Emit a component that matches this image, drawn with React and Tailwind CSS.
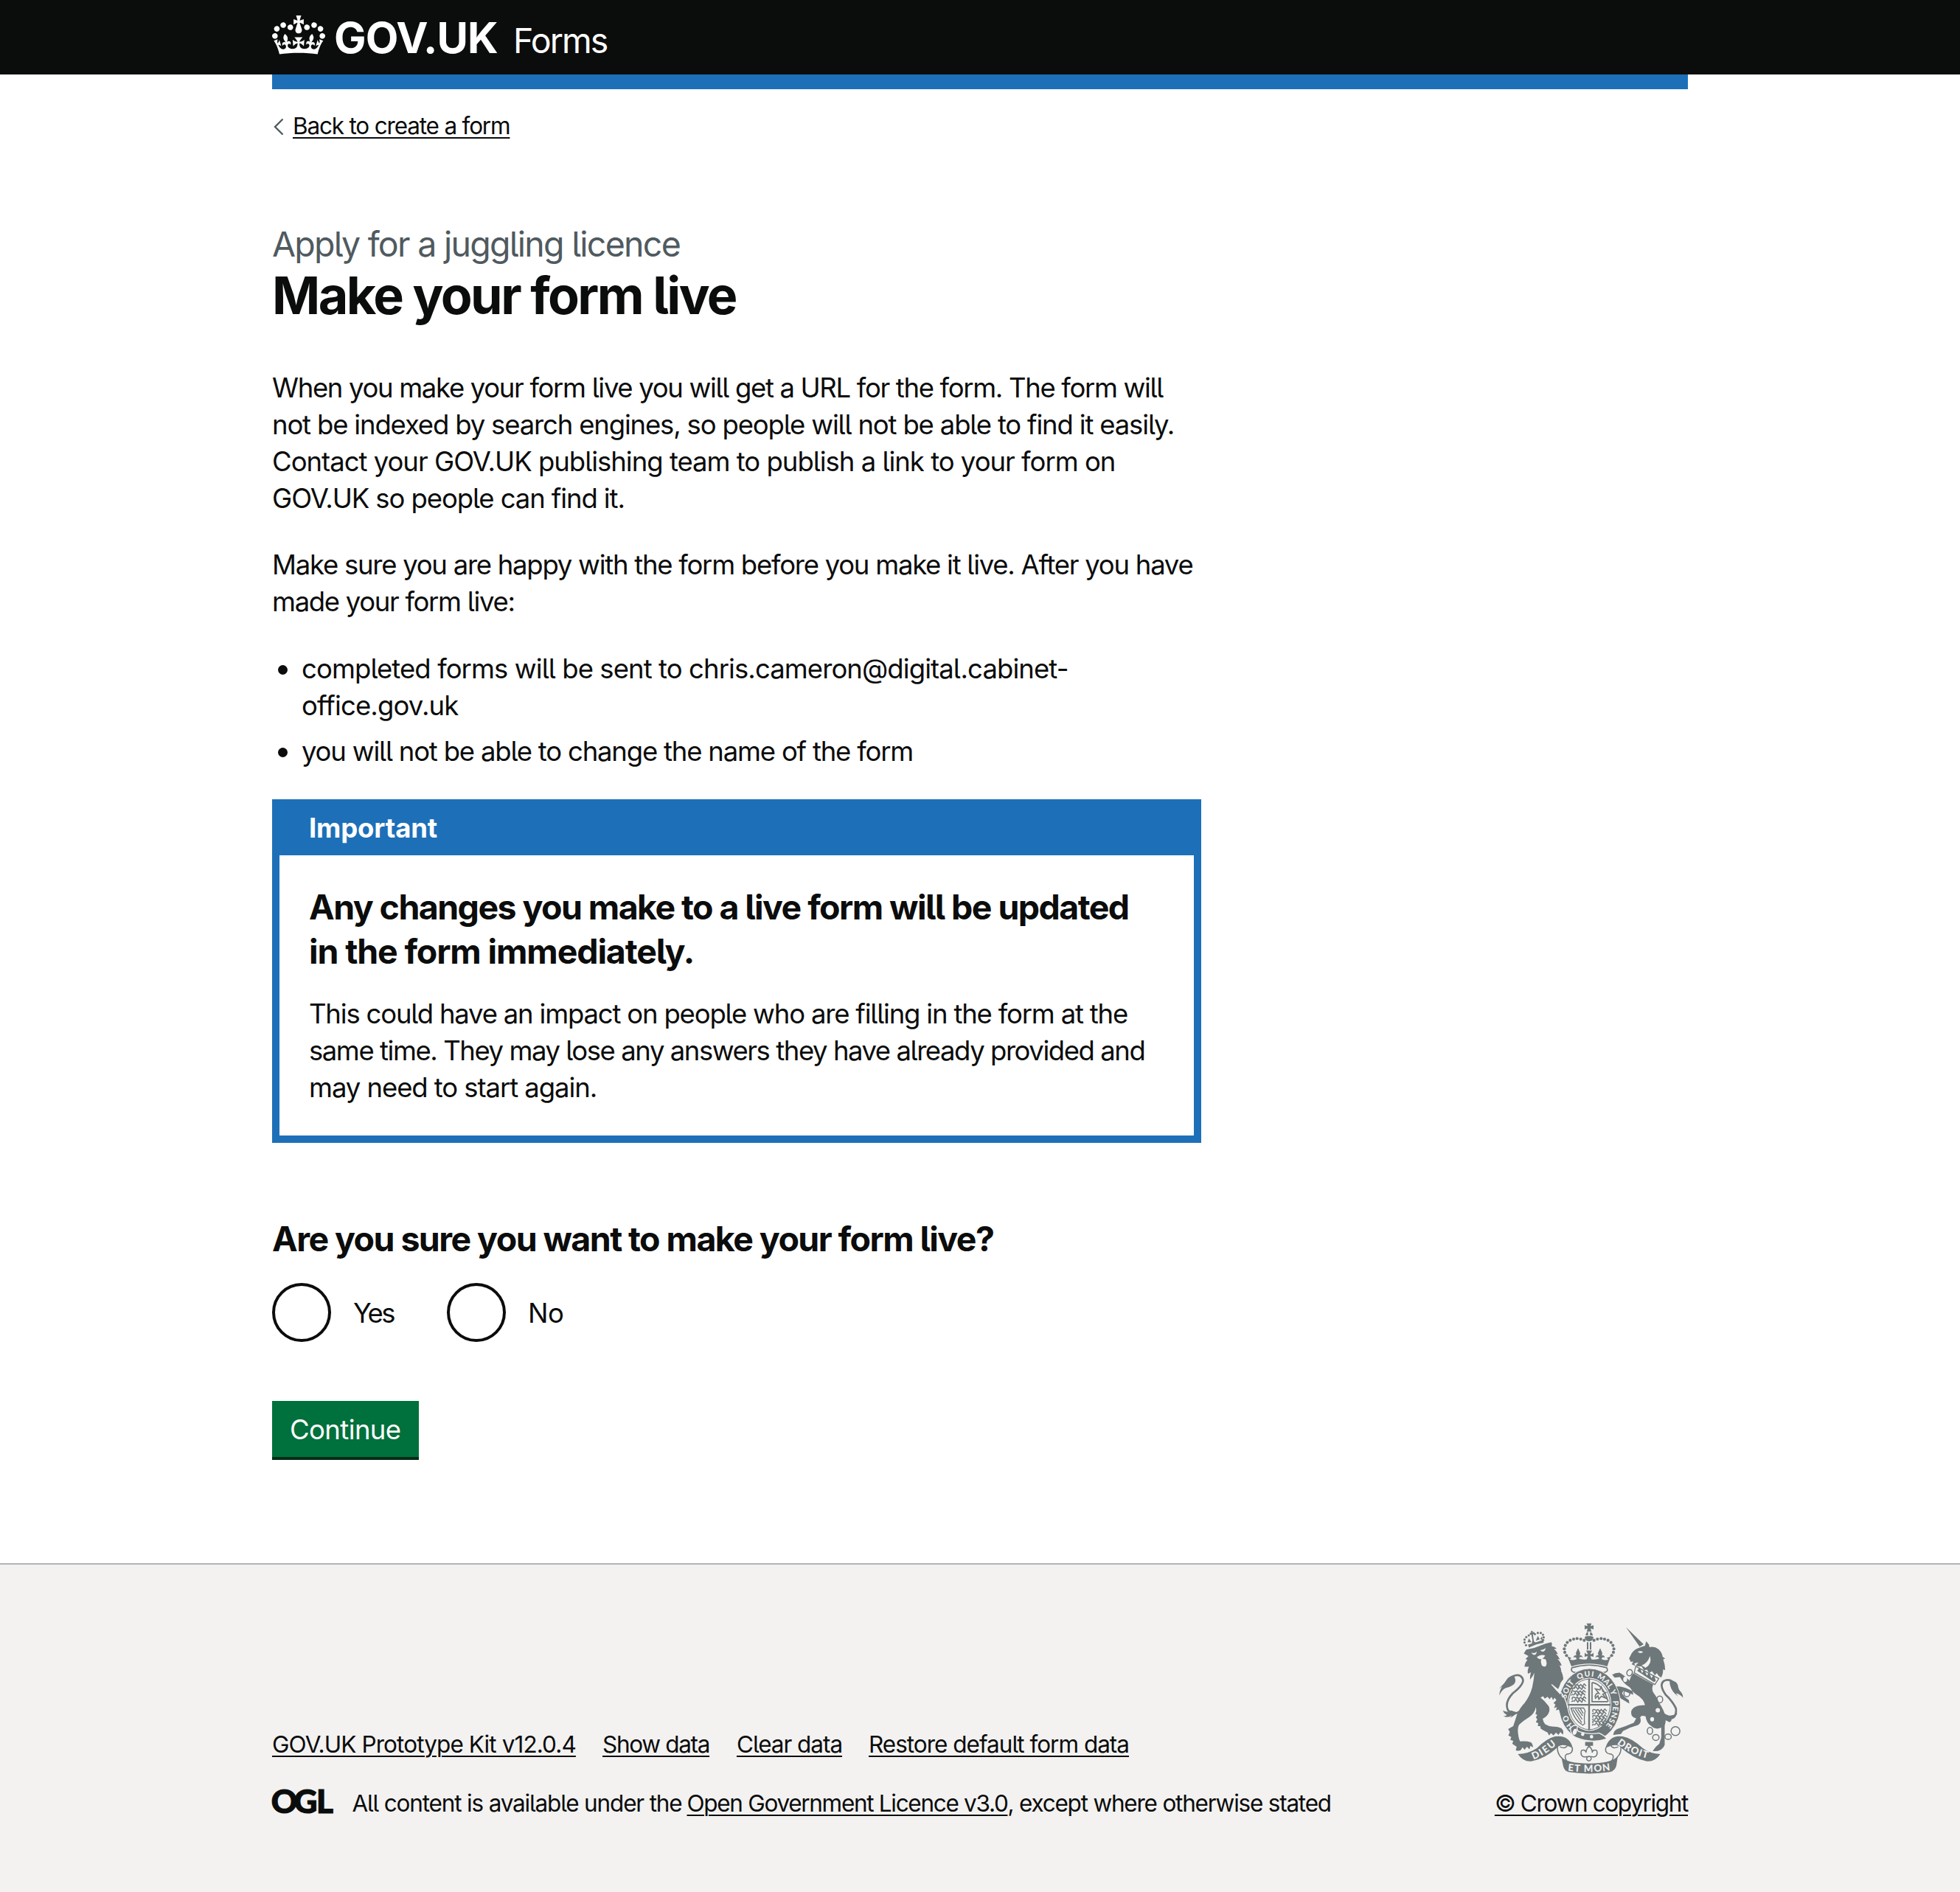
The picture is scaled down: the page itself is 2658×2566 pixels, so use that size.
const LION_MARKS = [[78, 250], [76, 276], [78, 302], [162, 352], [162, 376], [162, 398]];
const LION_CROWN = [[118, 94], [112, 83], [112, 71], [119, 61], [129, 54], [154, 49], [166, 44], [178, 44], [187, 51], [190, 62], [188, 73]];
const CROWN_BEADS = [[130, 74], [116, 69], [101, 67], [87, 69], [73, 74], [61, 83], [53, 95], [49, 109], [51, 123], [58, 136]];

function Crest({ className }) {
  return (
    <svg className={className} viewBox="0 0 765 625" fill="#6e7779">
      {/* unicorn */}
      <g transform="translate(465 0)">
        <path d="M60 20L132 90L116 100Z" />
        <path d="M73 148L84 126Q96 110 116 104L138 96Q140 84 143 78L154 92L156 102Q178 98 192 110Q208 124 210 142L220 148L212 152Q220 174 220 196L212 192Q212 212 204 226Q192 220 186 208L178 216L166 200L154 208L146 194L134 196L124 180Q108 182 100 176L112 164L94 168L98 178L84 172L90 160L80 162Z" />
        <path d="M108 122Q118 114 130 122Q122 130 108 122ZM124 176Q148 168 158 138Q168 170 140 186Z" fill="#f3f2f1" />
        <path d="M100 180L194 230L178 254L94 206Z" fill="#f3f2f1" stroke="#6e7779" strokeWidth="4" />
        <path d="M106 198L116 184L126 208L134 194L146 218L154 204L164 228L174 214L182 240L174 244Z" />
        <path d="M90 208Q130 232 172 254Q164 268 170 284Q186 304 196 330Q214 356 222 386Q224 402 218 422V500Q208 528 170 526Q176 512 196 496L204 470V430Q180 440 164 424Q144 412 140 384Q122 378 118 388Q126 410 108 420Q76 428 48 444L40 456L8 460Q10 444 24 436Q60 424 92 410L102 392Q78 388 82 362Q92 338 138 338Q132 312 104 296Q80 280 74 258Q70 234 90 208Z" />
        <path d="M80 244Q56 218 34 206Q16 206 4 214L14 226L36 224Q48 246 62 256L84 272ZM88 282Q60 266 36 262L2 262L6 276L26 276Q26 296 38 310L58 322L74 332L72 318L56 306L44 290L50 280L90 296Z" />
        <path d="M232 392Q268 396 264 352Q250 322 222 296Q194 256 214 240Q232 230 250 242" fill="none" stroke="#6e7779" strokeWidth="8" />
        <path d="M238 238Q266 236 272 258Q274 276 284 284Q294 296 292 308Q282 294 264 290L272 302Q238 278 238 238ZM196 344Q206 370 228 378Q240 386 270 372Q260 388 246 392Q248 404 238 408Q224 402 210 392Q196 372 196 344Z" />
        <g fill="none" stroke="#6e7779" strokeWidth="4.5">
          <ellipse cx="75" cy="206" rx="11" ry="13" transform="rotate(20 75 206)" />
          <ellipse cx="64" cy="290" rx="12" ry="14" />
          <ellipse cx="198" cy="315" rx="12" ry="14" />
          <ellipse cx="158" cy="443" rx="11" ry="14" />
          <ellipse cx="182" cy="470" rx="13" ry="12" />
          <ellipse cx="232" cy="467" rx="13" ry="11" />
          <circle cx="262" cy="444" r="18" />
        </g>
        <g fill="#f3f2f1">
          <ellipse cx="57" cy="233" rx="8" ry="11" />
          <ellipse cx="190" cy="359" rx="9" ry="9" />
          <ellipse cx="167" cy="396" rx="8" ry="9" />
        </g>
      </g>

      {/* crown, garter and shield */}
      <g transform="translate(225 0)">
        <path d="M140 5H160L156 16Q162 16 168 12V30Q162 26 156 26L160 38H140L144 26Q138 26 132 30V12Q138 16 144 16ZM136 54Q138 40 146 40V54ZM154 40Q164 44 165 54H154Z" />
        <path d="M132 62Q134 56 150 56Q166 56 168 62Q164 78 150 78Q136 78 132 62ZM141 82H147V112H141ZM153 82H159V112H153Z" />
        {CROWN_BEADS.map(([x, y]) => (
          <g key={x}>
            <circle cx={x} cy={y} r="6.2" />
            <circle cx={300 - x} cy={y} r="6.2" />
          </g>
        ))}
        <path d="M138 116H162L155 130Q164 132 168 124V142Q160 138 155 140L160 152Q184 154 192 148Q182 136 176 146Q178 132 188 136L186 126L195 106L204 126L202 136Q212 132 214 146Q206 138 200 150Q218 158 228 152L222 144Q234 146 240 136Q230 160 224 180Q150 158 78 180Q70 160 60 136Q66 146 78 144L72 152Q82 158 100 150Q94 138 86 146Q88 132 98 136L96 126L105 106L114 126L112 136Q122 132 124 146Q118 136 108 148Q116 154 140 152L145 140Q140 138 132 142V124Q136 132 145 130Z" />
        <path d="M80 186Q150 164 222 186Q232 204 206 206Q150 184 96 206Q72 204 80 186Z" fill="none" stroke="#6e7779" strokeWidth="5" />
        <ellipse cx="152" cy="337" rx="126" ry="148" stroke="#f3f2f1" strokeWidth="3" />
        <ellipse cx="151" cy="335" rx="90" ry="108" fill="#f3f2f1" />
        <path d="M150 230V440M64 337H238" stroke="#6e7779" strokeWidth="7" />
        <ellipse cx="151" cy="335" rx="85" ry="103" fill="none" stroke="#6e7779" strokeWidth="3" />
        {LION_MARKS.map(([x, y]) => (
          <path key={`${x}-${y}`} transform={`translate(${x} ${y})`} d="M4 14Q0 2 10 4Q16 10 24 4L30 12L38 4L44 12L52 2L60 10M10 22L18 12L26 24L32 14L42 24L48 12L58 22M0 22L8 18M30 6V22" fill="none" stroke="#6e7779" strokeWidth="4.5" />
        ))}
        <path d="M162 246V324H226M162 246Q206 252 228 324M174 306Q178 286 190 290L176 272L194 276L200 264L206 282L218 288L206 294L218 310L200 302L190 314L186 300L174 312" fill="none" stroke="#6e7779" strokeWidth="5" />
        <path d="M76 350H128L134 362Q128 390 132 414L124 420Q90 400 76 350ZM84 356L120 410M94 354L122 396M104 354L124 382M114 352L126 372" fill="none" stroke="#6e7779" strokeWidth="4" />
        <path id="garter" d="M98 434A96 116 0 1 1 191 443" fill="none" />
        <g fill="#f3f2f1" fontFamily="Lato" fontWeight="900" fontSize="31">
          <text><textPath href="#garter" startOffset="12" textLength="56">HO</textPath></text>
          <text><textPath href="#garter" startOffset="134" textLength="74">SOIT</textPath></text>
          <text><textPath href="#garter" startOffset="228" textLength="64">QUI</textPath></text>
          <text><textPath href="#garter" startOffset="306" textLength="98">MAL Y</textPath></text>
          <text><textPath href="#garter" startOffset="426" textLength="108">PENSE</textPath></text>
        </g>
        <path d="M74 434Q86 414 104 424Q96 436 108 446Q150 460 190 452Q214 462 222 476Q160 496 96 470Q76 462 74 434Z" stroke="#f3f2f1" strokeWidth="4" />
        <circle cx="124" cy="457" r="7" fill="#f3f2f1" />
        <circle cx="160" cy="467" r="7" fill="#f3f2f1" />
        <ellipse cx="92" cy="447" rx="8" ry="13" fill="#f3f2f1" transform="rotate(20 92 447)" />
      </g>

      {/* lion */}
      <path d="M126 92Q155 84 188 72L190 84Q160 88 130 104Z" />
      {LION_CROWN.map(([x, y]) => (
        <circle key={`${x}-${y}`} cx={x} cy={y} r="4.6" />
      ))}
      <path d="M138 36L145 35L145 42L152 40L153 48L146 49L150 78L158 84L142 88L144 74L140 51L134 52L133 44L139 43ZM124 82L130 66L140 82ZM158 76L166 56L174 70ZM176 68L183 58L186 74Z" />
      <path d="M109 128L119 112Q150 108 175 96Q200 86 221 82Q226 88 222 98Q236 100 243 108L232 110Q244 118 248 130L240 129Q250 138 256 152L246 150Q260 162 263 178L255 176Q262 192 262 202Q268 212 270 232Q258 244 254 262L248 274L222 256Q240 278 262 300Q276 322 282 345L284 362L278 352L274 368L266 358L256 368L252 356L240 360L244 346L232 350L238 336L230 330L242 318L234 308L228 318L222 304L214 314L206 304L194 312L188 302L177 307Q194 320 210 342Q216 352 212 366Q206 384 186 394Q188 408 196 416Q216 428 236 426Q262 428 268 440Q272 450 268 458L258 448L250 460L240 450L230 462L220 452L212 462L206 450Q190 442 178 434L176 424L166 424L168 412L158 408L164 396L158 388L164 378L156 374Q162 366 158 346Q154 370 132 386Q106 402 90 418Q82 430 86 456Q88 476 94 486Q120 484 138 490Q148 498 146 510L136 504L132 518L122 508L112 520L104 510L96 522Q84 526 76 522L80 508L62 496L66 484L54 480L58 468L46 462L52 448L45 436L66 424Q72 406 80 380Q92 350 112 330Q134 300 142 270Q150 240 152 206Q146 222 134 234Q134 218 138 204L126 210Q122 198 130 182L112 182Q112 168 124 154L116 150L128 138Z" />
      <path d="M222 254L252 278Q278 300 288 350" fill="none" stroke="#f3f2f1" strokeWidth="4" />
      <path d="M95 362Q66 384 44 358Q30 326 64 290Q106 258 106 236Q100 212 74 217Q60 220 50 230" fill="none" stroke="#6e7779" strokeWidth="8" />
      <path d="M68 218Q82 240 68 254Q54 264 36 268Q18 276 10 298Q8 284 20 264Q6 272 10 268Q28 254 38 236Q48 220 68 218Z" />
      <path d="M24 360Q40 370 58 360Q74 368 84 366Q72 382 52 390Q58 384 60 380Q46 392 26 384Q38 382 40 378Q28 374 24 360Z" />
      <path d="M140 124Q152 130 162 120Q160 134 150 134Q142 132 140 124ZM176 114Q188 114 198 106Q196 118 188 120Q180 120 176 114ZM162 142Q178 130 196 136Q192 146 184 148L198 152Q206 170 198 180Q188 184 182 176Q176 162 180 150Q168 154 162 142Z" fill="#f3f2f1" />

      {/* scroll */}
      <g transform="translate(-60 -30)">
        <path d="M145 568Q190 566 222 544Q262 504 296 496Q354 488 368 542L346 534Q318 526 304 542Q256 586 200 597Q166 600 145 568Z" />
        <path d="M725 568Q684 566 654 544Q608 502 572 496Q518 488 502 542L524 534Q552 526 566 542Q616 586 670 597Q704 600 725 568Z" />
        <path d="M322 580Q346 606 435 606Q526 606 552 576L546 616Q540 636 520 641Q435 654 352 641Q334 636 330 618Z" />
        <g fill="none" stroke="#6e7779" strokeWidth="4.5">
          <path d="M306 538Q304 566 324 584Q332 594 346 600M366 540Q372 566 344 568Q330 576 346 600M346 534Q338 548 316 538" />
          <path d="M564 538Q568 562 550 580Q542 594 524 600M504 540Q496 566 526 568Q542 576 524 600M524 534Q532 548 554 538" />
          <path d="M434 596Q418 590 430 578Q402 584 402 562Q402 548 416 552Q424 556 422 562Q424 544 435 536Q448 546 448 562Q446 556 454 552Q468 548 468 562Q468 584 440 578Q450 590 434 596ZM422 578H448" />
        </g>
        <path d="M419 518H451V534H441L435 542L429 534H419Z" />
        <path id="dieu" d="M206 590Q250 578 316 518" fill="none" />
        <path id="droit" d="M546 524Q606 572 686 588" fill="none" />
        <path id="etmon" d="M346 635Q435 647 526 633" fill="none" />
        <g fill="#f3f2f1" fontFamily="Lato" fontWeight="900" fontSize="40">
          <text><textPath href="#dieu" startOffset="2" textLength="112">DIEU</textPath></text>
          <text><textPath href="#droit" startOffset="2" textLength="140">DROIT</textPath></text>
          <text><textPath href="#etmon" startOffset="2" textLength="174">ET MON</textPath></text>
        </g>
      </g>
    </svg>
  );
}

function Crown({ className }) {
  return (
    <svg className={className} viewBox="0 0 132 97" fill="currentColor">
      <path fillRule="evenodd" d="M25 30.2c3.5 1.5 7.7-.2 9.1-3.7 1.5-3.6-.2-7.8-3.9-9.2-3.6-1.4-7.6.3-9.1 3.9-1.4 3.5.3 7.5 3.9 9zM9 39.5c3.6 1.5 7.8-.2 9.2-3.7 1.5-3.6-.2-7.8-3.9-9.1-3.6-1.5-7.6.2-9.1 3.8-1.4 3.5.3 7.5 3.8 9zM4.4 57.2c3.5 1.5 7.7-.2 9.1-3.8 1.5-3.6-.2-7.7-3.9-9.1-3.5-1.5-7.6.3-9.1 3.8-1.4 3.5.3 7.6 3.9 9.1zm38.3-21.4c3.5 1.5 7.7-.2 9.1-3.8 1.5-3.6-.2-7.7-3.9-9.1-3.6-1.5-7.6.3-9.1 3.8-1.3 3.6.4 7.7 3.9 9.1zm64.4-5.6c-3.6 1.5-7.8-.2-9.1-3.7-1.5-3.6.2-7.8 3.8-9.2 3.6-1.4 7.7.3 9.2 3.9 1.3 3.5-.4 7.5-3.9 9zm15.9 9.3c-3.6 1.5-7.7-.2-9.1-3.7-1.5-3.6.2-7.8 3.7-9.1 3.6-1.5 7.7.2 9.2 3.8 1.5 3.5-.3 7.5-3.8 9zm4.7 17.7c-3.6 1.5-7.8-.2-9.2-3.8-1.5-3.6.2-7.7 3.9-9.1 3.6-1.5 7.7.3 9.2 3.8 1.3 3.5-.4 7.6-3.9 9.1zM89.3 35.8c-3.6 1.5-7.8-.2-9.2-3.8-1.4-3.6.2-7.7 3.9-9.1 3.6-1.5 7.7.3 9.2 3.8 1.4 3.6-.3 7.7-3.9 9.1zM69.7 17.7l8.9 4.7V9.3l-8.9 2.8c-.2-.3-.5-.6-.9-.9L72.4 0H59.6l3.5 11.2c-.3.3-.6.5-.9.9l-8.8-2.8v13.1l8.8-4.7c.3.3.6.7.9.9l-5 15.4v.1c-.2.8-.4 1.6-.4 2.4 0 4.1 3.1 7.5 7 8.1h.2c.3 0 .7.1 1 .1.4 0 .7 0 1-.1h.2c4-.6 7.1-4.1 7.1-8.1 0-.8-.1-1.7-.4-2.4V34l-5.1-15.4c.4-.2.7-.6 1-.9zM66 92.8c16.9 0 32.8 1.1 47.1 3.2 4-16.9 8.9-26.7 14-33.5l-9.6-3.4c1 4.9 1.1 7.2 0 10.2-1.5-1.4-3-4.3-4.2-8.7L108.6 76c2.8-2 5-3.2 7.5-3.3-4.4 9.4-10 11.9-13.6 11.2-4.3-.8-6.3-4.6-5.6-7.9 1-4.7 5.7-5.9 8-.5 4.3-8.7-3-11.4-7.6-8.8 7.1-7.2 7.9-13.5 2.1-21.1-8 6.1-8.1 12.3-4.5 20.8-4.7-5.4-12.1-2.5-9.5 6.2 3.4-5.2 7.9-2 7.2 3.1-.6 4.3-6.4 7.8-13.5 7.2-10.3-.9-10.9-8-11.2-13.8 2.5-.5 7.1 1.8 11 7.3L80.2 60c-4.1 4.4-8 5.3-12.3 5.4 1.4-4.4 8-11.6 8-11.6H55.5s6.4 7.2 7.9 11.6c-4.2-.1-8-1-12.3-5.4l1.4 16.4c3.9-5.5 8.5-7.7 10.9-7.3-.3 5.8-.9 12.8-11.1 13.8-7.2.6-12.9-2.9-13.5-7.2-.7-5 3.8-8.3 7.1-3.1 2.7-8.7-4.6-11.6-9.4-6.2 3.7-8.5 3.6-14.7-4.6-20.8-5.8 7.6-5 13.9 2.2 21.1-4.7-2.6-11.9.1-7.7 8.8 2.3-5.5 7.1-4.2 8.1.5.7 3.3-1.3 7.1-5.7 7.9-3.5.7-9-1.8-13.5-11.2 2.5.1 4.7 1.3 7.5 3.3l-4.7-15.4c-1.2 4.4-2.7 7.2-4.3 8.7-1.1-3-.9-5.3 0-10.2l-9.5 3.4c5 6.9 9.9 16.7 14 33.5 14.8-2.1 30.8-3.2 47.7-3.2z" />
    </svg>
  );
}

function Line({ className = "", children }) {
  return <span className={`block whitespace-nowrap ${className}`}>{children}</span>;
}

function Radio({ label, className = "" }) {
  return (
    <label className={`flex h-20 ${className}`}>
      <span className="h-20 w-20 shrink-0 rounded-full border-4 border-[#0b0c0c]" />
      <span className="ml-[30px] mt-4">{label}</span>
    </label>
  );
}

function FooterLink({ className = "", children }) {
  return (
    <a className={`whitespace-nowrap underline decoration-2 underline-offset-[4px] ${className}`}>{children}</a>
  );
}

export default function App() {
  return (
    <div className="flex min-h-[2566px] w-full flex-col bg-white font-[Inter,sans-serif] text-[36.5px] leading-[50px] text-[#0b0c0c] [font-feature-settings:'cv05']">
      <header className="h-[101px] bg-[#0b0c0c] text-white">
        <div className="mx-auto flex w-[1920px] items-start">
          <Crown className="mt-[21px] h-[53px] w-[72px]" />
          <div className="ml-3 mt-[22px] flex items-baseline whitespace-nowrap">
            <span className="text-[58px] font-bold leading-[58px] tracking-[-0.87px]">GOV.UK</span>
            <span className="ml-[21px] text-[46.5px] leading-[46px] tracking-[-1.9px]">Forms</span>
          </div>
        </div>
      </header>

      <div className="mx-auto w-[1920px]">
        <div className="h-5 bg-[#1d70b8]" />
        <div className="mt-[30px] flex h-10 items-center text-[31.5px] leading-10">
          <svg className="mt-[1px] h-6 w-7" viewBox="0 0 28 24" fill="none" stroke="#505a5f" strokeWidth="2.4">
            <path d="M14.5 1.5L4 12L14.5 22.5" />
          </svg>
          <a className="whitespace-nowrap tracking-[-1.18px] underline decoration-2 underline-offset-[4px]">Back to create a form</a>
        </div>

        <main className="mt-[110px] w-[1260px]">
          <Line className="text-[46.5px] leading-[60px] tracking-[-1.73px] text-[#505a5f]">Apply for a juggling licence</Line>
          <h1 className="whitespace-nowrap text-[70px] font-bold leading-[80px] tracking-[-2.55px]">Make your form live</h1>

          <p className="mt-[60px]">
            <Line className="tracking-[-1.33px]">When you make your form live you will get a URL for the form. The form will</Line>
            <Line className="tracking-[-1.17px]">not be indexed by search engines, so people will not be able to find it easily.</Line>
            <Line className="tracking-[-1.01px]">Contact your GOV.UK publishing team to publish a link to your form on</Line>
            <Line className="tracking-[-1.1px]">GOV.UK so people can find it.</Line>
          </p>
          <p className="mt-10">
            <Line className="tracking-[-1.26px]">Make sure you are happy with the form before you make it live. After you have</Line>
            <Line className="tracking-[-1.32px]">made your form live:</Line>
          </p>

          <ul className="mt-[41px] flex flex-col gap-3">
            <li className="flex">
              <span className="ml-2 mr-[19px] mt-5 h-[13px] w-[13px] rounded-full bg-[#0b0c0c]" />
              <div>
                <Line className="tracking-[-0.92px]">completed forms will be sent to chris.cameron@digital.cabinet-</Line>
                <Line className="tracking-[-0.85px]">office.gov.uk</Line>
              </div>
            </li>
            <li className="flex">
              <span className="ml-2 mr-[19px] mt-5 h-[13px] w-[13px] rounded-full bg-[#0b0c0c]" />
              <Line className="tracking-[-1.2px]">you will not be able to change the name of the form</Line>
            </li>
          </ul>

          <section className="mt-10 bg-[#1d70b8] px-[10px] pb-[10px]">
            <h2 className="h-[76px] px-10 pt-[14px] font-bold tracking-[-0.15px] text-white">Important</h2>
            <div className="bg-white p-10">
              <h3 className="text-[46.5px] font-bold leading-[60px]">
                <Line className="tracking-[-1.57px]">Any changes you make to a live form will be updated</Line>
                <Line className="tracking-[-1.13px]">in the form immediately.</Line>
              </h3>
              <p className="mt-[30px]">
                <Line className="tracking-[-1.19px]">This could have an impact on people who are filling in the form at the</Line>
                <Line className="tracking-[-1.45px]">same time. They may lose any answers they have already provided and</Line>
                <Line className="tracking-[-1.07px]">may need to start again.</Line>
              </p>
            </div>
          </section>

          <h2 className="mt-[100px] whitespace-nowrap text-[46.5px] font-bold leading-[60px] tracking-[-1.56px]">Are you sure you want to make your form live?</h2>
          <div className="mt-[30px] flex">
            <Radio label="Yes" className="w-[237px] tracking-[-2.5px]" />
            <Radio label="No" className="tracking-[-0.5px]" />
          </div>

          <button className="mt-20 block h-[76px] w-[199px] whitespace-nowrap bg-[#00703c] pl-6 pt-[1px] text-left tracking-[-0.6px] text-white shadow-[0_4px_0_#002d18]">
            Continue
          </button>
        </main>
      </div>

      <footer className="mt-[144px] flex-1 border-t-2 border-[#b1b4b6] bg-[#f3f2f1] text-[31.5px] leading-10">
        <div className="mx-auto flex w-[1920px] justify-between pt-[78px]">
          <div className="pt-[146px]">
            <div className="flex">
              <FooterLink className="w-[448px] tracking-[-0.9px]">GOV.UK Prototype Kit v12.0.4</FooterLink>
              <FooterLink className="w-[182px] tracking-[-1.32px]">Show data</FooterLink>
              <FooterLink className="w-[179px] tracking-[-1.04px]">Clear data</FooterLink>
              <FooterLink className="tracking-[-1px]">Restore default form data</FooterLink>
            </div>
            <div className="mt-10 flex items-start">
              <svg className="h-9 w-[83px] overflow-visible" viewBox="0 0 83 36" fill="#0b0c0c" stroke="#0b0c0c" strokeWidth="1.2" fontFamily="Lato" fontWeight="900" fontSize="44">
                <text x="-1.2 29.5 60" y="32.5">OGL</text>
              </svg>
              <span className="ml-[25.5px] flex">
                <span className="w-[454px] whitespace-nowrap tracking-[-1.17px]">All content is available under the</span>
                <FooterLink className="tracking-[-1.3px]">Open Government Licence v3.0</FooterLink>
                <span className="whitespace-nowrap tracking-[-1.22px]">, except where otherwise stated</span>
              </span>
            </div>
          </div>
          <div className="flex flex-col items-end">
            <Crest className="mr-1 h-[208px] w-[255px]" />
            <FooterLink className="mt-[18px] tracking-[-1.35px]">© Crown copyright</FooterLink>
          </div>
        </div>
      </footer>
    </div>
  );
}
